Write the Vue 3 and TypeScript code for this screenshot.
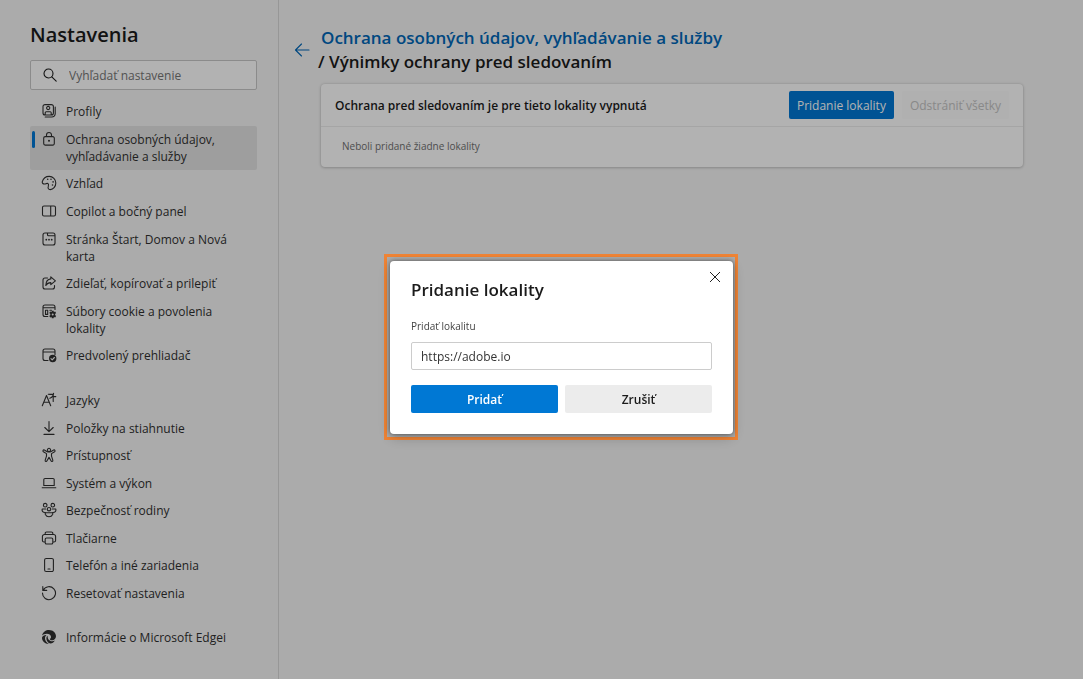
<script setup lang="ts">
import { ref } from 'vue'

interface NavItem {
  label: string
  icon: string
  active?: boolean
}

// Outline icons are stroked on a 16 by 16 grid; "solid" parts are filled.
const icons: Record<string, { line: string; solid?: string; cut?: string }> = {
  profiles: {
    line: 'M4 1.6h6.4a2 2 0 0 1 2 2V10a2 2 0 0 1-2 2H4a2 2 0 0 1-2-2V3.600a2 2 0 0 1 2-2ZM5.600 5a1.600 1.600 0 1 0 3.200 0a1.600 1.600 0 1 0-3.200 0M4.200 11.800V9.800c0-.7.400-1.100 1-1.100h4c.600 0 1 .4 1 1.100v2M14.200 4v6.700a3.300 3.300 0 0 1-3.300 3.300H4.200',
  },
  lock: {
    line: 'M4.200 5.600h7.600a1.500 1.500 0 0 1 1.500 1.500v5.500a1.500 1.500 0 0 1-1.500 1.500H4.200a1.500 1.500 0 0 1-1.500-1.500V7.100a1.500 1.500 0 0 1 1.500-1.500ZM5.500 5.400V4a2.500 2.500 0 0 1 5 0v1.400',
    solid: 'M7 9.800a1 1 0 1 0 2 0a1 1 0 1 0-2 0',
  },
  palette: {
    line: 'M1.300 6.600C2.300 3.300 5 1.400 8.200 1.400c3.700 0 6.600 2.900 6.600 6.500 0 3.800-2.700 6.700-5.500 6.700-1.800 0-2.600-1.300-2.100-2.900.4-1.500.8-2.600-.3-3.200-1.100-.6-2 .3-3.100.5C2.200 9.200 .9 8.200 1.300 6.600Z',
    solid: 'M5.900 4.300a.8.8 0 1 0 1.600 0a.8.8 0 1 0-1.600 0M9.200 4.300a.8.8 0 1 0 1.600 0a.8.8 0 1 0-1.600 0M11.300 6.900a.8.8 0 1 0 1.600 0a.8.8 0 1 0-1.600 0M10.700 10a.8.8 0 1 0 1.600 0a.8.8 0 1 0-1.600 0',
  },
  panel: {
    line: 'M3 3h10a1.500 1.500 0 0 1 1.500 1.500v7a1.500 1.500 0 0 1-1.500 1.500H3a1.500 1.500 0 0 1-1.500-1.500v-7A1.500 1.500 0 0 1 3 3ZM9.700 3v10',
  },
  start: {
    line: 'M4 2h8a2 2 0 0 1 2 2v8a2 2 0 0 1-2 2H4a2 2 0 0 1-2-2V4a2 2 0 0 1 2-2ZM6.500 2v1.700c0 .6.400 1 1 1H14',
    solid: 'M4.400 8.700a.9.9 0 1 0 1.800 0a.9.9 0 1 0-1.800 0M7.100 8.700a.9.9 0 1 0 1.800 0a.9.9 0 1 0-1.800 0M9.800 8.700a.9.9 0 1 0 1.800 0a.9.9 0 1 0-1.800 0',
  },
  share: {
    line: 'M6.500 3H4a2 2 0 0 0-2 2v7a2 2 0 0 0 2 2h7.500a2 2 0 0 0 2-2v-1.500M9.800 1.800l4.600 4-4.600 3.900V7.600c-2.400 0-3.900.8-5 2.800.1-3.700 1.800-6.100 5-6.500Z',
  },
  cookies: {
    line: 'M6.800 13.500H4a2 2 0 0 1-2-2V4a2 2 0 0 1 2-2h8a2 2 0 0 1 2 2v2.500M2 4.800h12M4.500 7.200h2.200v4.200H4.500ZM8.900 7.200h1.600',
    solid: 'M10.800 7.700h1.800l.3 1.300 1.300-.4.9 1.500-1 .9v1l1 .9-.9 1.500-1.300-.4-.3 1.300h-1.800l-.3-1.300-1.300.4-.9-1.500 1-.9v-1l-1-.9.9-1.500 1.300.4ZM11.700 10.500a1 1 0 1 0 0 2a1 1 0 1 0 0-2Z',
  },
  browser: {
    line: 'M7 13.500H4a2 2 0 0 1-2-2V4a2 2 0 0 1 2-2h8a2 2 0 0 1 2 2v3.500M2 5h12',
    solid: 'M8 11.500a3.700 3.700 0 1 0 7.400 0a3.700 3.700 0 1 0-7.400 0',
    cut: 'M10 11.700l1.200 1.100 2.200-2.300',
  },
  languages: {
    line: 'M1.300 13.700L5.500 3.500l4.200 10.200M2.800 10.300h5.400M7.300 2.300c2 0 3.700.2 4.800-.1M12.600 1.300c-.2 2.300-1.400 4.200-3.800 5M12.200 3v6.500M12.300 4.600h2.500',
  },
  download: {
    line: 'M8 1.500v10M3.800 7.500L8 11.600l4.200-4.100M3 14.400h10',
  },
  accessibility: {
    line: 'M6.400 2.900a1.600 1.600 0 1 0 3.200 0a1.600 1.600 0 1 0-3.200 0M5.800 4.400L3.400 3.100c-1.300-.6-2 .9-1 1.600l3.100 1.900v2.600l-1.300 3.900c-.4 1.400 1.300 1.900 1.800.7L8 10.400l2 3.400c.5 1.200 2.200.7 1.800-.7l-1.300-3.900V6.600l3.100-1.900c1-.7.3-2.200-1-1.600l-2.400 1.300c-1.400.7-3 .7-4.400 0Z',
  },
  system: {
    line: 'M4 3.500h8a1.200 1.200 0 0 1 1.200 1.200v5.800H2.800V4.700A1.200 1.200 0 0 1 4 3.500ZM1.200 12.800h13.600',
  },
  family: {
    line: 'M2.400 3.200a1.800 1.800 0 1 0 3.600 0a1.800 1.800 0 1 0-3.600 0M10 3.200a1.800 1.800 0 1 0 3.600 0a1.800 1.800 0 1 0-3.600 0M6.300 7.200a1.700 1.700 0 1 0 3.400 0a1.700 1.700 0 1 0-3.400 0M4.800 7H1.300c-.8 2 .8 3.700 3 3.500M11.200 7h3.500c.8 2-.8 3.700-3 3.500M5 10.800h6c.9 0 .9 1 .6 1.700-.7 1.500-2 2.200-3.600 2.200s-2.900-.7-3.600-2.200c-.3-.7-.3-1.700.6-1.700Z',
  },
  printer: {
    line: 'M4.200 12H3a1.600 1.600 0 0 1-1.600-1.600V6.500a2 2 0 0 1 2-2h9.200a2 2 0 0 1 2 2v3.900A1.600 1.600 0 0 1 13 12h-1.200M4.200 4.500V3.300A1.300 1.300 0 0 1 5.500 2h5a1.300 1.300 0 0 1 1.300 1.300v1.200M5.500 8h5a1.300 1.300 0 0 1 1.300 1.300v3.400a1.300 1.300 0 0 1-1.300 1.300h-5a1.300 1.300 0 0 1-1.300-1.300V9.300A1.300 1.300 0 0 1 5.500 8Z',
  },
  phone: {
    line: 'M5.200 1.500h5.600a1.600 1.600 0 0 1 1.600 1.600v9.800a1.600 1.600 0 0 1-1.600 1.600H5.200a1.600 1.600 0 0 1-1.600-1.600V3.100a1.600 1.600 0 0 1 1.600-1.600ZM7 12h2',
  },
  reset: {
    line: 'M2.200 5.200A6.500 6.500 0 1 1 1.500 8M1.800 1.600v3.800h3.900',
  },
  edge: {
    line: '',
    solid: 'M1 6.600C1.900 3 4.700 1 8 1c4.200 0 7 3 7 6.300 0 2.400-1.700 3.900-3.700 3.900-1.600 0-2.600-.7-2.400-1.300.8-.6 1.200-1.300 1.100-2.200C9.800 5.900 8 4.800 5.900 4.800 3.900 4.800 2 5.500 1 6.600ZM1 8.500c.6-1.700 2.400-2.700 4.500-2.500-1 .8-1.500 2-1.500 3.300 0 2.400 1.500 4.500 3.800 5.600C4 15 .8 12 1 8.500ZM5.400 9.300c0-1.100.5-2 1.300-2.500-.3 3.200 1.600 5.500 4.500 5.500 1 0 1.900-.3 2.700-.8-1.100 1.900-2.700 2.900-4.300 2.900-2.400 0-4.200-2.400-4.200-5.100Z',
  },
}

const groups: { name: string; items: NavItem[] }[] = [
  {
    name: 'general',
    items: [
      { label: 'Profily', icon: 'profiles' },
      { label: 'Ochrana osobných údajov, vyhľadávanie a služby', icon: 'lock', active: true },
      { label: 'Vzhľad', icon: 'palette' },
      { label: 'Copilot a bočný panel', icon: 'panel' },
      { label: 'Stránka Štart, Domov a Nová karta', icon: 'start' },
      { label: 'Zdieľať, kopírovať a prilepiť', icon: 'share' },
      { label: 'Súbory cookie a povolenia lokality', icon: 'cookies' },
      { label: 'Predvolený prehliadač', icon: 'browser' },
    ],
  },
  {
    name: 'system',
    items: [
      { label: 'Jazyky', icon: 'languages' },
      { label: 'Položky na stiahnutie', icon: 'download' },
      { label: 'Prístupnosť', icon: 'accessibility' },
      { label: 'Systém a výkon', icon: 'system' },
      { label: 'Bezpečnosť rodiny', icon: 'family' },
      { label: 'Tlačiarne', icon: 'printer' },
      { label: 'Telefón a iné zariadenia', icon: 'phone' },
      { label: 'Resetovať nastavenia', icon: 'reset' },
    ],
  },
  {
    name: 'about',
    items: [{ label: 'Informácie o Microsoft Edgei', icon: 'edge' }],
  },
]

const query = ref('')
const site = ref('https://adobe.io')
const dialogOpen = ref(true)
</script>

<template>
  <div class="page">
    <aside class="sidebar">
      <h1 class="sidebar-title">Nastavenia</h1>
      <label class="search">
        <svg class="icon" viewBox="0 0 16 16" aria-hidden="true">
          <circle cx="6.500" cy="6.500" r="4.500" />
          <path d="M9.800 9.800l4.400 4.400" />
        </svg>
        <input v-model="query" type="search" placeholder="Vyhľadať nastavenie" aria-label="Vyhľadať nastavenie" />
      </label>
      <nav class="nav">
        <ul v-for="group in groups" :key="group.name" class="group" :class="group.name">
          <li v-for="item in group.items" :key="item.label" class="row">
            <a href="#" class="link" :class="{ active: item.active }">
              <svg class="icon" viewBox="0 0 16 16" aria-hidden="true">
                <path :d="icons[item.icon].line" />
                <path v-if="icons[item.icon].solid" class="solid" :d="icons[item.icon].solid" />
                <path v-if="icons[item.icon].cut" class="cut" :d="icons[item.icon].cut" />
              </svg>
              <span>{{ item.label }}</span>
            </a>
          </li>
        </ul>
      </nav>
    </aside>

    <main class="main">
      <header class="heading">
        <button class="back" type="button" aria-label="Späť">
          <svg class="icon" viewBox="0 0 16 16" aria-hidden="true">
            <path d="M15 8H1.500M7.500 2L1.500 8l6 6" />
          </svg>
        </button>
        <h2 class="crumbs">
          <a href="#">Ochrana osobných údajov, vyhľadávanie a služby</a>
          <span class="current">/ Výnimky ochrany pred sledovaním</span>
        </h2>
      </header>

      <section class="card">
        <div class="card-head">
          <h3>Ochrana pred sledovaním je pre tieto lokality vypnutá</h3>
          <button class="button primary" type="button" @click="dialogOpen = true">Pridanie lokality</button>
          <button class="button ghost" type="button" disabled>Odstrániť všetky</button>
        </div>
        <p class="empty">Neboli pridané žiadne lokality</p>
      </section>
    </main>

    <div v-if="dialogOpen" class="overlay">
      <div class="highlight">
        <form class="dialog" role="dialog" aria-labelledby="dialog-title" @submit.prevent="dialogOpen = false">
          <button class="close" type="button" aria-label="Zavrieť" @click="dialogOpen = false">
            <svg viewBox="0 0 12 12" aria-hidden="true">
              <path d="M1 1l10 10M11 1L1 11" />
            </svg>
          </button>
          <h2 id="dialog-title">Pridanie lokality</h2>
          <label for="site">Pridať lokalitu</label>
          <input id="site" v-model="site" type="text" />
          <div class="actions">
            <button class="button primary strong" type="submit">Pridať</button>
            <button class="button neutral strong" type="button" @click="dialogOpen = false">Zrušiť</button>
          </div>
        </form>
      </div>
    </div>
  </div>
</template>

<style>
body {
  margin: 0;
  background: #f5f5f5;
}
</style>

<style scoped>
.page {
  display: flex;
  min-height: 100vh;
  color: #1b1b1b;
  font: 12px/17px "Open Sans", "Noto Sans", sans-serif;
}

.page * {
  box-sizing: border-box;
}

h1, h2, h3, p, ul {
  margin: 0;
  padding: 0;
}

button, input {
  font: inherit;
  color: inherit;
}

a {
  color: inherit;
  text-decoration: none;
}

.icon {
  flex: none;
  width: 16px;
  height: 16px;
  fill: none;
  stroke: currentColor;
  stroke-width: 1.1;
  stroke-linecap: round;
  stroke-linejoin: round;
}

.solid {
  fill: currentColor;
  fill-rule: evenodd;
  stroke: none;
}

.cut {
  stroke: #f5f5f5;
}

.sidebar {
  flex: none;
  width: 279px;
  padding: 20px 21px 24px 30px;
  border-right: 1px solid #d8d8d8;
}

.sidebar-title {
  font-size: 20px;
  line-height: 30px;
  font-weight: 600;
}

.search {
  display: flex;
  align-items: center;
  gap: 11px;
  height: 30px;
  margin: 10px 0 8px;
  padding: 0 11px;
  border: 1px solid #c8c8c8;
  border-radius: 2px;
  background: #fff;
}

.search input {
  flex: 1;
  min-width: 0;
  padding: 0;
  border: 0;
  outline: 0;
  background: none;
}

.search input::placeholder {
  color: #767676;
  opacity: 1;
}

.nav {
  display: flex;
  flex-direction: column;
  gap: 17px;
  color: #303030;
}

.group {
  display: flex;
  flex-direction: column;
  list-style: none;
}

.general {
  min-height: 272px;
}

.system {
  min-height: 220px;
}

.row {
  display: flex;
  flex: 1 0 auto;
}

.link {
  position: relative;
  display: flex;
  flex: 1;
  align-items: flex-start;
  gap: 9px;
  padding: 5px 20px 5px 11px;
}

.link.active {
  border-radius: 2px;
  background: #e3e3e3;
}

.link.active::before {
  content: "";
  position: absolute;
  left: 2px;
  top: 5px;
  width: 3px;
  height: 17px;
  border-radius: 2px;
  background: #0078d4;
}

.main {
  flex: 1;
  min-width: 0;
  padding: 26px 60px 26px 15px;
}

.heading {
  display: flex;
  align-items: center;
}

.back {
  display: flex;
  margin-right: 8px;
  padding: 0;
  border: 0;
  background: none;
  color: #0067b8;
}

.crumbs {
  display: flex;
  flex-direction: column;
  font-size: 17px;
  line-height: 24px;
  font-weight: 600;
}

.crumbs a {
  margin-left: 3px;
  color: #0067b8;
}

.card {
  margin: 10px 0 0 27px;
  border-radius: 4px;
  background: #fff;
  box-shadow: 0 0 3px rgba(0, 0, 0, 0.15), 0 1px 3px rgba(0, 0, 0, 0.15);
}

.card-head {
  display: flex;
  align-items: center;
  gap: 8px;
  padding: 7px 14px;
  border-bottom: 1px solid #ececec;
}

.card-head h3 {
  flex: 1;
  font-size: 12px;
  font-weight: 600;
}

.button {
  height: 28px;
  padding: 0 8px;
  border: 0;
  border-radius: 2px;
}

.primary {
  background: #0078d4;
  color: #fff;
}

.ghost {
  background: #fcfcfc;
  color: #c4c4c4;
}

.neutral {
  background: #ececec;
}

.strong {
  flex: 1;
  font-weight: 600;
}

.empty {
  padding: 11px 21px 12px;
  color: #707070;
  font-size: 10px;
}

.overlay {
  position: fixed;
  inset: 0;
  display: grid;
  place-items: center;
  padding: 15px 0 0 39px;
  background: rgba(0, 0, 0, 0.3);
}

.highlight {
  width: 354px;
  padding: 4px 2px 3px 3px;
  border: 3px solid #f08435;
}

.dialog {
  position: relative;
  display: flex;
  flex-direction: column;
  padding: 15px 21px 21px;
  border-radius: 4px;
  background: #fff;
  box-shadow: 0 0 4px rgba(0, 0, 0, 0.5), 0 4px 14px rgba(0, 0, 0, 0.2);
}

.dialog h2 {
  font-size: 17px;
  line-height: 28px;
  font-weight: 600;
}

.dialog label {
  margin: 14px 0 7px;
  color: #444;
  font-size: 10px;
}

.dialog input {
  height: 28px;
  padding: 0 9px;
  border: 1px solid #ccc;
  border-radius: 2px;
  outline: 0;
  color: #333;
}

.actions {
  display: flex;
  gap: 7px;
  margin-top: 15px;
}

.close {
  position: absolute;
  top: 8px;
  right: 10px;
  display: flex;
  padding: 2px;
  border: 0;
  background: none;
}

.close svg {
  width: 12px;
  height: 12px;
  stroke: #222;
  stroke-width: 1;
}
</style>
